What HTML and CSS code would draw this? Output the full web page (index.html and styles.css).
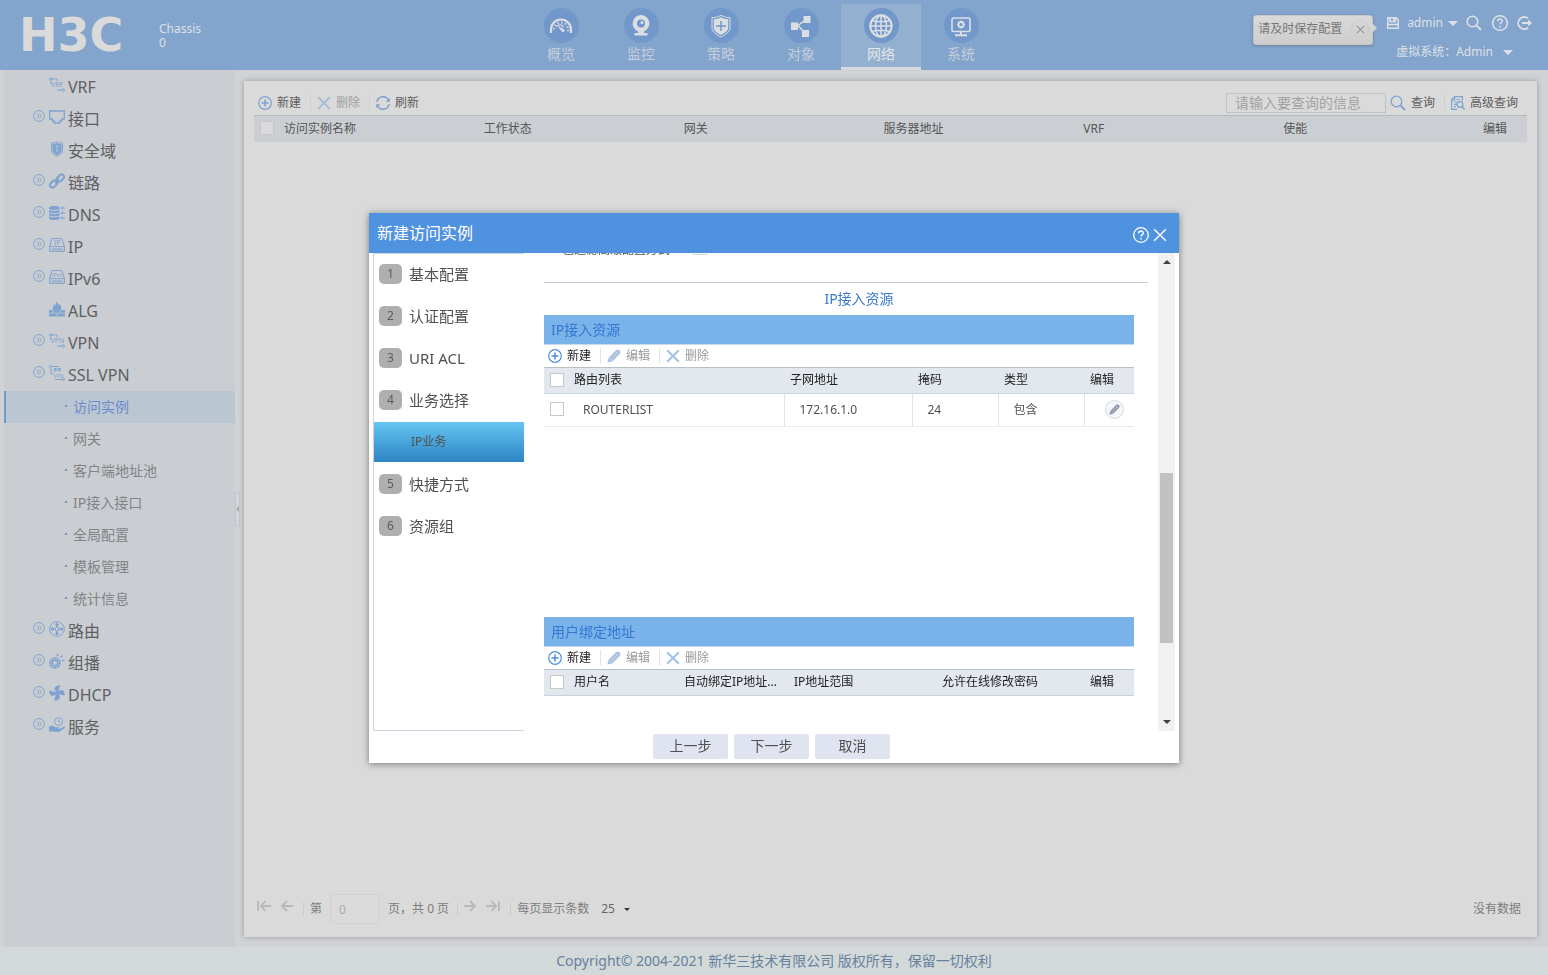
FILE: index.html
```html
<!DOCTYPE html>
<html lang="zh-CN">
<head>
<meta charset="utf-8">
<title>H3C - 访问实例</title>
<link rel="stylesheet" href="styles.css">
</head>
<body>
<svg class="defs" aria-hidden="true">
  <defs>
    <symbol id="more" viewBox="0 0 12 12"><circle cx="6" cy="6" r="5.4"/><path d="M3.6 3.6 6 6 3.6 8.4M6.2 3.6 8.6 6 6.2 8.4"/></symbol>
    <symbol id="less" viewBox="0 0 12 12"><circle cx="6" cy="6" r="5.4"/><path d="M3.8 3.6 6 5.6 8.2 3.6M3.8 6.2 6 8.2 8.2 6.2"/></symbol>
    <symbol id="plus" viewBox="0 0 14 14"><circle cx="7" cy="7" r="6.3"/><path d="M7 3.5v7M3.500 7h7" stroke-width="1.600"/></symbol>
    <symbol id="cross" viewBox="0 0 12 12"><path d="M1 1 11 11M11 1 1 11"/></symbol>
    <symbol id="pencil" viewBox="0 0 14 14"><path class="fill" d="M9.200 1 11.400.4 13.600 2.600 13 4.800 5.200 12.400.4 13.600 1.600 8.800Z"/><path class="cut" d="M2.300 9 5 11.700M4.600 9.400 10.400 3.600M8.200 1.900 12.100 5.800"/></symbol>
    <symbol id="search" viewBox="0 0 16 16"><circle cx="6.500" cy="6.500" r="5.300"/><path d="M10.400 10.400 15 15" stroke-width="2"/></symbol>
    <symbol id="help" viewBox="0 0 16 16"><circle cx="8" cy="8" r="7.300"/><path d="M5.700 6.300C5.700 3.200 10.300 3.300 10.300 6 10.300 7.600 8 7.600 8 9.600M8 11v1.600" stroke-width="1.500"/></symbol>
    <symbol id="prev" viewBox="0 0 12 12"><path d="M12 6H1M6 1 1 6l5 5"/></symbol>
    <symbol id="first" viewBox="0 0 14 12"><path d="M1 1v10M14 6H4M8.500 1 4 6l4.500 5"/></symbol>
    <symbol id="next" viewBox="0 0 12 12"><path d="M0 6h11M6 1l5 5-5 5"/></symbol>
    <symbol id="last" viewBox="0 0 14 12"><path d="M13 1v10M0 6h10M5.500 1 10 6l-4.500 5"/></symbol>
  </defs>
</svg>

<header class="topbar">
  <div class="brand">
    <span class="logo">H3C</span>
    <span class="chassis">Chassis<br>0</span>
  </div>
  <nav class="modules">
    <a class="module" href="#"><span class="disc"><svg viewBox="0 0 24 24"><path d="M2 19v-3.500a10 10 0 0 1 20 0V19" stroke-width="2.200"/><path d="M5 15.500a7 7 0 0 1 14 0v2.500" stroke-width="1.800" stroke-dasharray="1.500 2.200"/><path d="M7.500 12.500c3-2.500 5-2 7 .5" stroke-width="1.400"/><path class="solid" d="M8 11.500 14.500 15a1.600 1.600 0 1 1-2 2Z"/></svg></span>概览</a>
    <a class="module" href="#"><span class="disc"><svg viewBox="0 0 24 24"><path class="solid" d="M12 1a8.500 8.500 0 0 0-3 16.400V19H5.500v2.500h13V19H15v-1.600A8.500 8.500 0 0 0 12 1Z"/><circle cx="12" cy="9.500" r="4" class="hole"/><circle cx="13" cy="8.500" r="1.500" class="solid"/></svg></span>监控</a>
    <a class="module" href="#"><span class="disc"><svg viewBox="0 0 24 24"><path d="M12 1.300C9 3.200 6 3.500 3 3.600V14c0 4 4.500 6.500 9 9 4.500-2.500 9-5 9-9V3.600c-3-.1-6-.4-9-2.300Z" stroke-width="1"/><path class="solid" d="M12 3.300C9.500 4.900 7 5.200 4.800 5.200V14c0 3 3.700 5 7.200 7 3.500-2 7.200-4 7.200-7V5.200c-2.200 0-4.700-.3-7.200-1.900Z"/><path class="mark" d="M12 7v10M7 12h10"/></svg></span>策略</a>
    <a class="module" href="#"><span class="disc"><svg viewBox="0 0 24 24"><path class="solid" d="M14.500 2h7v7h-7ZM2 8.500h7v7.500H2ZM13 16h7v7h-7Z"/><path d="M15 7 9 11.500l6 6.500" stroke-width="1.500"/></svg></span>对象</a>
    <a class="module active" href="#"><span class="disc"><svg viewBox="0 0 24 24"><circle cx="12" cy="12" r="10.700" stroke-width="2"/><ellipse cx="12" cy="12" rx="5.500" ry="10.700"/><path d="M12 1.300v21.400M1.300 12h21.400M3 6.500c5 1.500 13 1.500 18 0M3 17.500c5-1.500 13-1.500 18 0"/></svg></span>网络</a>
    <a class="module" href="#"><span class="disc"><svg viewBox="0 0 24 24"><rect x="3" y="4" width="18" height="13.500" rx="1.500" stroke-width="1.600"/><path d="M6 21.300h12M12 18v3" stroke-width="2"/><circle cx="12" cy="10.500" r="2.500" stroke-width="1.800"/><path d="M12 6.500v1.500M12 13v1.500M8 10.500h1.500M14.500 10.500H16M9.200 7.700l1 1M14.800 7.700l-1 1M9.200 13.300l1-1M14.800 13.300l-1-1"/></svg></span>系统</a>
  </nav>
  <div class="account">
    <div class="tip">请及时保存配置<button class="tip-close" aria-label="关闭"><svg><use href="#cross"/></svg></button></div>
    <div class="account-lines">
      <div class="account-row">
        <button class="save" aria-label="保存"><svg viewBox="0 0 12 12"><path d="M.7.7h8.600l2 2v8.600H.7ZM3 1v3.500h5.500V1M6.800 1.500v2M.7 7.500h10.600"/></svg></button>
        <button class="user">admin<i class="caret"></i></button>
        <button class="find" aria-label="搜索"><svg><use href="#search"/></svg></button>
        <button class="helper" aria-label="帮助"><svg><use href="#help"/></svg></button>
        <button class="logout" aria-label="退出"><svg viewBox="0 0 16 16"><path d="M12 3.300a6 6 0 1 0 0 9.400M6 8h8" stroke-width="1.800"/><path class="fill" d="M12 4.500 16 8l-4 3.500Z"/></svg></button>
      </div>
      <button class="vsys"><span>虚拟系统：</span><span>Admin</span><i class="caret"></i></button>
    </div>
  </div>
</header>

<div class="workspace">
  <aside class="sidebar">
    <ul class="tree">
      <li><a class="node" href="#"><span class="tw"></span><svg class="ic" viewBox="0 0 16 16"><path d="M2 2h6v2M8 13h6M2 4v3"/><circle cx="1.700" cy="2" r="1.200"/><circle cx="14.300" cy="12.800" r="1.200"/><text x="2" y="10">VRF</text></svg>VRF</a></li>
      <li><a class="node" href="#"><svg class="tw"><use href="#more"/></svg><svg class="ic line" viewBox="0 0 16 16"><path d="M.7 2h14.600v8h-2.600v2h-2v2H5.300v-2h-2v-2H.7Z"/></svg>接口</a></li>
      <li><a class="node" href="#"><span class="tw"></span><svg class="ic" viewBox="0 0 16 16"><path d="M8 .8c-2 1-4 1.200-5.500 1.200v7.500c0 3 3 4.500 5.500 5.800 2.500-1.300 5.500-2.800 5.500-5.800V2C12 2 10 1.800 8 .8Z"/><path class="fill" d="M8 2c-1.600.7-3 1-4.500 1v6.500c0 2.300 2.500 3.600 4.500 4.700 2-1.100 4.500-2.400 4.500-4.700V3C11 3 9.600 2.700 8 2Z"/><path class="cut" d="M6.500 5h3M8 5v6" stroke-width=".8"/></svg>安全域</a></li>
      <li><a class="node" href="#"><svg class="tw"><use href="#more"/></svg><svg class="ic link" viewBox="0 0 16 16"><rect x="7.500" y="2.500" width="8" height="5" rx="2.500" transform="rotate(-45 11.500 5)"/><rect x=".5" y="8.500" width="8" height="5" rx="2.500" transform="rotate(-45 4.500 11)"/><path d="M6 10l4-4"/></svg>链路</a></li>
      <li><a class="node" href="#"><svg class="tw"><use href="#more"/></svg><svg class="ic" viewBox="0 0 16 16"><path class="fill" d="M0 2.800C0 .3 10.500.3 10.500 2.800v10.400c0 2.500-10.500 2.500-10.500 0Z"/><path class="cut" d="M0 4.300c1 1.500 9.500 1.500 10.500 0M0 7.500C1 9 9.500 9 10.500 7.500M0 10.700c1 1.500 9.500 1.500 10.500 0"/><path d="M11 3h5M11 8h5M11 13h5M13.500 1.500v3M13.500 6.500v3M13.500 11.500v3"/></svg>DNS</a></li>
      <li><a class="node" href="#"><svg class="tw"><use href="#more"/></svg><svg class="ic" viewBox="0 0 16 16"><path d="M.6 14.400V9.500L3 1.600h10l2.400 7.900v4.900ZM.6 9.600h14.800M2.500 12h11"/><path stroke-dasharray="1 1" d="M2.500 13h11"/><text x="5" y="7.800">IP</text></svg>IP</a></li>
      <li><a class="node" href="#"><svg class="tw"><use href="#more"/></svg><svg class="ic" viewBox="0 0 16 16"><path d="M.6 14.400V9.500L3 1.600h10l2.400 7.900v4.900ZM.6 9.600h14.800M2.500 12h11"/><path stroke-dasharray="1 1" d="M2.500 13h11"/><text class="tiny" x="3" y="7.500">IPv6</text></svg>IPv6</a></li>
      <li><a class="node" href="#"><span class="tw"></span><svg class="ic" viewBox="0 0 16 16"><path class="fill" d="M0 9h4C3 6 5 5 5.500 3c1 .5 1 1 1 2C7 4 7 2 7.500.5 9 2 9.500 3 9.500 4.500l1-1.500C12 5 13 7 12 9h4v6.500H0Z"/><path class="cut" d="M0 12.200h16M4 9.500v2.500M11 9.500v2.500M8 12.500v3" stroke-width=".7"/></svg>ALG</a></li>
      <li><a class="node" href="#"><svg class="tw"><use href="#more"/></svg><svg class="ic" viewBox="0 0 16 16"><path d="M2 2h6v2M8 13h6M2 4v3"/><circle cx="1.700" cy="2" r="1.200"/><circle cx="14.300" cy="12.800" r="1.200"/><text x="1.500" y="10">VPN</text></svg>VPN</a></li>
      <li><a class="node" href="#"><svg class="tw"><use href="#less"/></svg><svg class="ic" viewBox="0 0 16 16"><path d="M2 1.500h8M2 3v6h2M6 14.500h8v-2M5 3.500h2.500v1.200H5v1.300h2.500M9 3.500h2.500v1.200H9v1.300h2.500"/><circle cx="1.500" cy="1.500" r="1"/><circle cx="14.500" cy="14.500" r="1"/><text class="tiny" x="4.500" y="12.500">VPN</text></svg>SSL VPN</a>
        <ul class="leaves">
          <li><a class="leaf current" href="#">访问实例</a></li>
          <li><a class="leaf" href="#">网关</a></li>
          <li><a class="leaf" href="#">客户端地址池</a></li>
          <li><a class="leaf" href="#">IP接入接口</a></li>
          <li><a class="leaf" href="#">全局配置</a></li>
          <li><a class="leaf" href="#">模板管理</a></li>
          <li><a class="leaf" href="#">统计信息</a></li>
        </ul>
      </li>
      <li><a class="node" href="#"><svg class="tw"><use href="#more"/></svg><svg class="ic" viewBox="0 0 16 16"><circle cx="8" cy="8" r="7.300"/><circle cx="8" cy="8" r="2"/><path class="fill" d="M8 1.500 10.300 4H9v1.500H7V4H5.700ZM8 14.500 5.700 12H7v-1.500h2V12h1.300ZM1.500 8 4 5.700V7h1.500v2H4v1.300ZM14.500 8 12 10.300V9h-1.500V7H12V5.700Z"/></svg>路由</a></li>
      <li><a class="node" href="#"><svg class="tw"><use href="#more"/></svg><svg class="ic" viewBox="0 0 16 16"><circle cx="6" cy="10" r="5" stroke-width="1.500"/><circle cx="6" cy="10" r="2.600" stroke-width="1.300"/><path d="M6 4.800v2.600M6 12.600v2.600M.8 10h2.600M8.600 10h2.600M2.400 6.400l1.800 1.800M9.600 6.400 7.800 8.200M2.400 13.600l1.800-1.800M9.600 13.600l-1.800-1.800"/><path d="M8.500.8V3.500M13.500 2.500 11.500 4.500M12.500 7.500H15.500" stroke-width="1.500"/></svg>组播</a></li>
      <li><a class="node" href="#"><svg class="tw"><use href="#more"/></svg><svg class="ic" viewBox="0 0 16 16"><path class="fill" d="M7.500 7C4 5 5.500.8 10 .3 12.500.3 9.500 3 9.300 6.300 11.500 4 15.700 5 15.700 9.500c0 2.500-2.700-.5-6-.3C12 11.500 11 15.200 6.300 15.700c-2.500 0 .4-3 .4-6.200C4.500 12 .3 11 .3 6.800.3 4.200 4 7.200 7.500 7Z"/></svg>DHCP</a></li>
      <li><a class="node" href="#"><svg class="tw"><use href="#more"/></svg><svg class="ic" viewBox="0 0 16 16"><circle cx="9.500" cy="4.500" r="3.900"/><path d="M9.500 2.300v2.500h1.500"/><path class="fill" d="M0 9.500c3-1.500 5-.5 6 .7h3.500c1 0 1 1.300 0 1.500H7l3.500.3L15 9.500c1 0 1.300.5.5 1.500L11 14.500c-2 .8-5 .5-7 0L0 14.500Z"/></svg>服务</a></li>
    </ul>
  </aside>
  <button class="collapse" aria-label="收起"></button>

  <main class="panel">
    <div class="toolbar">
      <button class="tool"><svg class="s14"><use href="#plus"/></svg>新建</button>
      <button class="tool off"><svg class="s14 thick"><use href="#cross"/></svg>删除</button>
      <button class="tool"><svg class="s14" viewBox="0 0 14 14"><path stroke-width="1.500" d="M.9 6a6.200 6.200 0 0 1 11.600-2M13.100 8A6.200 6.200 0 0 1 1.500 10"/><path class="fill" d="M13.800 1.800v4H9.800ZM.2 12.200v-4H4.200Z"/></svg>刷新</button>
      <div class="query">
        <input type="text" aria-label="查询信息" placeholder="请输入要查询的信息">
        <button class="tool"><svg class="s16"><use href="#search"/></svg>查询</button>
        <button class="tool"><svg class="s14" viewBox="0 0 14 14"><path d="M6 13.400H.6V3.500L3.500.6h7.900V5M.6 4h3V.6M3 6h3M3 8.300h3M3 10.600h2M5.500 3.500H9"/><circle cx="9" cy="8.500" r="2.800" stroke-width="1.300"/><path d="M11 10.600 13.600 13.400" stroke-width="1.500"/></svg>高级查询</button>
      </div>
    </div>
    <table class="list">
      <colgroup><col class="c-check"><col><col><col><col><col><col><col class="c-last"></colgroup>
      <thead><tr><th><input type="checkbox" aria-label="全选"></th><th>访问实例名称</th><th>工作状态</th><th>网关</th><th>服务器地址</th><th>VRF</th><th>使能</th><th>编辑</th></tr></thead>
    </table>
    <div class="pager">
      <button aria-label="首页"><svg class="wide"><use href="#first"/></svg></button>
      <button aria-label="上一页"><svg><use href="#prev"/></svg></button>
      <i class="bar"></i>
      <label for="page">第</label>
      <input id="page" type="text" value="0">
      <span>页，共 0 页</span>
      <i class="bar tight"></i>
      <button aria-label="下一页"><svg><use href="#next"/></svg></button>
      <button aria-label="末页"><svg class="wide"><use href="#last"/></svg></button>
      <i class="bar"></i>
      <span>每页显示条数</span>
      <button class="size">25<i class="caret small"></i></button>
      <span class="empty">没有数据</span>
    </div>
  </main>
</div>

<footer class="copyright">Copyright© 2004-2021 新华三技术有限公司 版权所有，保留一切权利</footer>

<div class="overlay">
  <section class="dialog" role="dialog" aria-labelledby="dlg-title">
    <header class="dialog-head">
      <h2 id="dlg-title">新建访问实例</h2>
      <button aria-label="帮助"><svg class="s16"><use href="#help"/></svg></button>
      <button aria-label="关闭"><svg class="s14"><use href="#cross"/></svg></button>
    </header>
    <div class="dialog-body">
      <ol class="steps">
        <li><a href="#"><b>1</b>基本配置</a></li>
        <li><a href="#"><b>2</b>认证配置</a></li>
        <li><a href="#"><b>3</b>URI ACL</a></li>
        <li><a href="#"><b>4</b>业务选择</a></li>
        <li><a class="sub" href="#">IP业务</a></li>
        <li><a href="#"><b>5</b>快捷方式</a></li>
        <li><a href="#"><b>6</b>资源组</a></li>
      </ol>
      <div class="form">
        <div class="peek"><label for="filter">包过滤高级配置方式</label><input id="filter" type="checkbox"></div>
        <h3>IP接入资源</h3>
        <div class="grid">
          <h4>IP接入资源</h4>
          <div class="tools">
            <button class="tool"><svg class="s14"><use href="#plus"/></svg>新建</button>
            <button class="tool off"><svg class="s14"><use href="#pencil"/></svg>编辑</button>
            <button class="tool off"><svg class="s14 thick"><use href="#cross"/></svg>删除</button>
          </div>
          <table class="rows">
            <colgroup><col class="w24"><col><col class="w128"><col class="w86"><col class="w86"><col class="w50"></colgroup>
            <thead><tr><th><input type="checkbox" aria-label="全选"></th><th>路由列表</th><th>子网地址</th><th>掩码</th><th>类型</th><th>编辑</th></tr></thead>
            <tbody><tr><td><input type="checkbox" aria-label="选择 ROUTERLIST"></td><td>ROUTERLIST</td><td>172.16.1.0</td><td>24</td><td>包含</td><td><button class="edit" aria-label="编辑"><svg><use href="#pencil"/></svg></button></td></tr></tbody>
          </table>
        </div>
        <div class="grid">
          <h4>用户绑定地址</h4>
          <div class="tools">
            <button class="tool"><svg class="s14"><use href="#plus"/></svg>新建</button>
            <button class="tool off"><svg class="s14"><use href="#pencil"/></svg>编辑</button>
            <button class="tool off"><svg class="s14 thick"><use href="#cross"/></svg>删除</button>
          </div>
          <table class="rows">
            <colgroup><col class="w24"><col><col class="w110"><col class="w148"><col class="w148"><col class="w50"></colgroup>
            <thead><tr><th><input type="checkbox" aria-label="全选"></th><th>用户名</th><th>自动绑定IP地址...</th><th>IP地址范围</th><th>允许在线修改密码</th><th>编辑</th></tr></thead>
          </table>
        </div>
      </div>
      <div class="scroll"><i class="up"></i><span class="above"></span><span class="thumb"></span><span class="below"></span><i class="down"></i></div>
    </div>
    <footer class="dialog-foot">
      <button>上一步</button><button>下一步</button><button>取消</button>
    </footer>
  </section>
</div>
</body>
</html>
```
FILE: styles.css
```css
* { box-sizing: border-box; }

body {
  margin: 0;
  min-height: 100vh;
  display: flex;
  flex-direction: column;
  background: #d0d2d6;
  font: 12px/16px "Noto Sans", "Noto Sans CJK SC", sans-serif;
  color: #555;
}

button { margin: 0; padding: 0; border: 0; background: none; font: inherit; color: inherit; display: flex; align-items: center; }
a { color: inherit; text-decoration: none; }
ul, ol { margin: 0; padding: 0; list-style: none; }
h2, h3, h4 { margin: 0; font-weight: 400; }
svg { display: block; flex: none; fill: none; stroke: currentColor; }
.defs { position: absolute; width: 0; height: 0; }
.fill { fill: currentColor; stroke: none; }

input[type="checkbox"] {
  appearance: none;
  display: block;
  width: 14px;
  height: 14px;
  margin: 0 0 1px;
  border: 1px solid #c8c8c8;
  background: #fff;
}

.s14 { width: 14px; height: 14px; stroke-width: 1.2; }
.s16 { width: 16px; height: 16px; stroke-width: 1.3; }
.thick { stroke-width: 1.8; }

.caret { border: 5px solid transparent; border-top-color: currentColor; border-bottom-width: 0; }
.caret.small { border-width: 3px 3px 0; }

/* top bar */
.topbar {
  display: grid;
  grid-template-columns: 521fr 480px 547fr;
  height: 70px;
  background: #83a4cc;
  color: #dde1e6;
}
.brand { display: flex; align-items: center; gap: 22px; padding-left: 19px; }
.logo { width: 118px; font: bold 46px/70px "DejaVu Sans", sans-serif; color: #dadada; }
.chassis { line-height: 14px; padding-top: 2px; }
.modules { display: flex; padding-top: 4px; }
.module {
  flex: 1;
  display: flex;
  flex-direction: column;
  align-items: center;
  gap: 1px;
  padding-top: 4px;
  border-bottom: 3px solid transparent;
  font-size: 14px;
  line-height: 20px;
  color: #c3cedc;
}
.module.active { background: #93b0d0; border-color: #d6d9de; color: #e4e6e8; }
.disc { display: grid; place-items: center; width: 35px; height: 35px; border-radius: 50%; background: #7298cb; color: #dcdfe2; }
.disc svg { width: 24px; height: 24px; stroke-width: 1.5; }
.solid { fill: currentColor; stroke: none; }
.hole { fill: #7298cb; stroke: none; }
.mark { stroke: #7298cb; }

.account { display: flex; justify-content: flex-end; gap: 14px; padding-right: 16px; }
.tip {
  position: relative;
  display: flex;
  align-items: center;
  justify-content: space-between;
  width: 120px;
  height: 30px;
  margin-top: 15px;
  padding: 0 3px 2px 4px;
  border: 1px solid #c4c4c4;
  border-radius: 3px;
  background: linear-gradient(#d9d9d9, #cdcdcd);
  box-shadow: 0 1px 3px #6b7f99;
  color: #777;
}
.tip::after { content: ""; position: absolute; left: 100%; top: 7px; border: 5px solid transparent; border-left-color: #d6d6d6; border-right-width: 0; }
.tip-close { justify-content: center; width: 18px; height: 18px; border-radius: 50%; border: 1px solid #cbcbcb; color: #888; }
.tip-close svg { width: 9px; height: 9px; stroke-width: 1.4; }
.account-lines { display: flex; flex-direction: column; gap: 13px; padding-top: 15px; }
.account-row { display: flex; align-items: center; gap: 8px; }
.account-row svg { width: 16px; height: 16px; stroke-width: 1.5; }
.account-row .save svg { width: 12px; height: 12px; }
.user { gap: 5px; }
.find { margin-right: 2px; }
.vsys { padding-left: 9px; }
.vsys .caret { margin-left: 10px; }

/* workspace */
.workspace { flex: 1; display: flex; }
.sidebar { width: 231px; margin-left: 4px; padding-top: 1px; background: #cacdd2; }
.node { display: flex; align-items: center; height: 32px; padding-left: 29px; font-size: 16px; color: #5e6063; }
.tw { width: 12px; height: 12px; margin: 0 4px 6px 0; color: #7fa3d0; }
.ic { width: 16px; height: 16px; margin: 0 3px 4px 0; color: #7fa3d0; }
.ic text { font: 7px "Noto Sans", sans-serif; fill: currentColor; stroke: none; }
.ic .tiny { font-size: 5px; }
.ic.line { stroke-width: 1.3; }
.ic.link { stroke-width: 2; }
.cut { stroke: #cacdd2; }
.leaf { display: flex; align-items: center; gap: 6px; height: 32px; padding-left: 61px; font-size: 14px; color: #818487; }
.leaf::before { content: ""; width: 2px; height: 2px; background: #7d95b3; margin-bottom: 2px; }
.leaf.current { padding-left: 59px; border-left: 2px solid #6f9ace; background: #bac6d2; color: #6a8cc8; }
.collapse { align-self: center; width: 5px; height: 34px; border: 1px solid #c3c6ca; background: #d3d5d8; }
.collapse::before { content: ""; border: 3px solid transparent; border-right-color: #aaa; border-left-width: 0; }

.panel {
  flex: 1;
  display: flex;
  flex-direction: column;
  min-width: 0;
  margin: 11px 11px 10px 4px;
  padding: 9px 10px;
  background: #dadada;
  box-shadow: 0 0 5px #96989c;
}
.toolbar { display: flex; align-items: center; height: 25px; }
.tool { gap: 5px; padding: 0 9px 0 4px; color: #5c5c5c; line-height: 16px; }
.tool + .tool { border-left: 1px solid #cfcfcf; padding-left: 6px; }
.tool svg { color: #7fa3d0; }
.tool.off { color: #a0a0a0; }
.tool.off svg { color: #a9bfd9; }
.query { display: flex; align-items: center; margin-left: auto; }
.query input { width: 160px; height: 20px; padding: 0 8px; border: 1px solid #bfc3ca; background: transparent; font: 14px/18px "Noto Sans", "Noto Sans CJK SC", sans-serif; }
.query input::placeholder { color: #a2a2a2; }

table { width: 100%; table-layout: fixed; border-collapse: collapse; }
th { text-align: left; font-weight: 400; white-space: nowrap; }
.list th { height: 26px; padding: 0; background: #cbcfd3; border-top: 1px solid #b3b9bf; }
.list th:first-child { padding-left: 6px; }
.list input[type="checkbox"] { background: #dadada; border-color: #c5c7c9; }
.c-check { width: 30px; }
.c-last { width: 44px; }

.pager { display: flex; align-items: center; margin-top: auto; height: 38px; padding: 0 6px 0 3px; color: #7d7d7d; }
.pager button { margin-right: 10px; margin-bottom: 6px; color: #b9b9b9; }
.pager svg { width: 12px; height: 12px; stroke-width: 1.8; }
.pager svg.wide { width: 14px; }
.bar { width: 1px; height: 14px; margin-right: 6px; background: #cccdd0; }
.pager input { width: 50px; height: 30px; margin: 0 8px; padding: 0 8px; border: 1px solid #d0d1d5; border-radius: 2px; background: transparent; color: #aaa; font: inherit; }
.tight { margin-left: 8px; }
.pager .size { gap: 9px; margin: 0 0 0 12px; color: #666; }
.pager .size .caret { color: #333; }
.empty { margin-left: auto; }

.copyright { height: 28px; background: #d3d8d9; text-align: center; font-size: 14px; line-height: 28px; color: #66829f; }

/* dialog */
.overlay { position: fixed; inset: 0; display: grid; place-items: center; }
.dialog { width: 810px; background: #fff; box-shadow: 0 1px 7px #777; color: #505050; }
.dialog-head { display: flex; align-items: center; gap: 4px; height: 40px; padding: 0 12px 0 8px; background: #4f92e0; color: #fff; }
.dialog-head h2 { flex: 1; font-size: 16px; }
.dialog-head button { padding-top: 4px; }
.dialog-body { display: flex; height: 478px; padding: 0 4px; }
.steps { width: 151px; border: 1px solid #ccd2e0; border-right: 0; font-size: 15px; }
.steps a { display: flex; align-items: center; gap: 7px; height: 42px; padding-left: 5px; }
.steps li:first-child a { height: 41px; }
.steps b { width: 23px; height: 20px; border-radius: 5px; background: #afafaf; font-size: 12px; font-weight: 400; line-height: 20px; text-align: center; color: #5c5c5c; }
.steps .sub { height: 40px; margin: 1px 0; padding-left: 37px; background: linear-gradient(#64c5f1, #2e84c4); font-size: 12px; }
.form { flex: 1; min-width: 0; padding: 0 24px 0 20px; overflow: hidden; }
.peek { display: flex; align-items: flex-end; gap: 23px; height: 30px; margin-right: -14px; padding: 0 0 27px 18px; border-bottom: 1px solid #c3ccd8; }
.peek label { line-height: 11px; }
.peek input[type="checkbox"] { margin: 0; border-color: #cfdcf0; }
h3 { margin-right: -40px; font-size: 14px; line-height: 32px; text-align: center; color: #3b79cc; }
.grid { height: 302px; }
.grid h4 { height: 30px; padding-left: 7px; background: #7ab2ea; border-bottom: 1px solid #c9daf0; font-size: 14px; line-height: 30px; color: #3578d2; }
.tools { display: flex; align-items: center; height: 22px; }
.tools .tool { color: #222; }
.tools .tool svg { color: #4f8fdc; }
.tools .off { color: #999; }
.tools .off svg { color: #a3c3ea; }
.tools .tool + .tool { border-color: #e4e4e4; }
.tools .cut, .edit .cut { stroke: #fff; }
.rows th { height: 26px; padding: 0 0 0 6px; background: #e2e8ee; border-top: 1px solid #b9bfc7; border-bottom: 1px solid #ccd3e0; color: #222; }
.rows td { height: 33px; padding: 0 0 0 15px; border-bottom: 1px solid #e8e8e8; border-left: 1px solid #dfe2e8; }
.rows td:nth-child(-n+2) { border-left: 0; }
.rows td:first-child { padding-left: 6px; }
.edit { justify-content: center; width: 19px; height: 19px; margin-left: 5px; border: 1px solid #d5d9e4; border-radius: 50%; background: #f5f6fa; color: #8f98ab; }
.edit svg { width: 11px; height: 11px; }
.w24 { width: 24px; }
.w50 { width: 50px; }
.w86 { width: 86px; }
.w110 { width: 110px; }
.w128 { width: 128px; }
.w148 { width: 148px; }
.scroll { display: flex; flex-direction: column; align-items: center; width: 17px; padding: 7px 0; background: #f1f1f1; }
.up { border: 4px solid transparent; border-top-width: 0; border-bottom-color: #404040; margin-bottom: 6px; }
.down { border: 4px solid transparent; border-bottom-width: 0; border-top-color: #404040; margin-top: 6px; }
.above { flex: 203; }
.thumb { flex: 170; width: 13px; background: #c1c1c1; }
.below { flex: 71; }
.dialog-foot { display: flex; justify-content: center; gap: 6px; padding: 3px 5px 4px 0; }
.dialog-foot button { justify-content: center; width: 75px; height: 25px; border-radius: 2px; background: #dfe4f0; font-size: 14px; }
```
